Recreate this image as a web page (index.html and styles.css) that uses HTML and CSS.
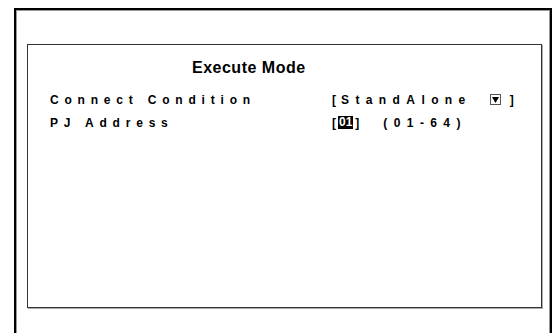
FILE: index.html
```html
<!DOCTYPE html>
<html lang="en">
<head>
    <meta charset="UTF-8">
    <meta name="viewport" content="width=device-width, initial-scale=1.0">
    <title>Execute Mode</title>
    <link rel="stylesheet" href="styles.css">
</head>
<body>
    <div class="screen">
        <div class="panel">
            <h1 class="title">Execute Mode</h1>

            <div class="row">
                <span class="label">Connect Condition</span>
                <span class="value">
                    <span class="bracket">[</span><span class="text">StandAlone</span>
                    <svg class="arrow" width="11" height="11" viewBox="0 0 11 11">
                        <rect x="0.5" y="0.5" width="10" height="10" fill="#fff" stroke="#555"/>
                        <polygon points="2,3 9,3 5.5,9" fill="#000"/>
                    </svg>
                    <span class="bracket end">]</span>
                </span>
            </div>

            <div class="row">
                <span class="label">PJ Address</span>
                <span class="value">
                    <span class="bracket tight">[</span><span class="selected">01</span><span class="bracket close">]</span>
                    <span class="range">(01-64)</span>
                </span>
            </div>
        </div>
    </div>
</body>
</html>
```

FILE: styles.css
```css
body {
    margin: 0;
    background-color: #fff;
    font-family: "Liberation Sans", Arial, sans-serif;
    color: #000;
}

/* outer screen frame, runs past the bottom of the shot */
.screen {
    margin: 8px 0 0 14px;
    width: 534px;
    height: 340px;
    border: 2px solid #000;
    border-bottom: 0;
    box-shadow: inset 0 0 0 1px #999;
}

.panel {
    margin: 34px 0 0 11px;
    width: 513px;
    height: 249px;
    padding-top: 13px;
    border: 1px solid #333;
    box-shadow: 1px 1px 0 #aaa;
}

.title {
    margin: 0 0 10px;
    padding-left: 164px;
    font-size: 16px;
    line-height: 20px;
    letter-spacing: 0.5px;
    font-weight: bold;
}

.row {
    display: flex;
    align-items: center;
    height: 23px;
    padding-left: 22px;
    font-size: 12px;
    font-weight: bold;
}

.label {
    width: 282px;
    letter-spacing: 5.8px;
}

.value {
    display: flex;
    align-items: center;
}

.text,
.range {
    letter-spacing: 6.4px;
}

.bracket {
    margin-right: 5px;
}

.bracket.tight {
    margin-right: 2px;
}

.bracket.close {
    margin: 0 0 0 2px;
}

.arrow {
    margin-left: 18px;
}

.bracket.end {
    margin-left: 9px;
}

.selected {
    padding: 0 1px;
    background-color: #000;
    color: #fff;
    line-height: 13px;
}

.range {
    margin-left: 24px;
}
```
